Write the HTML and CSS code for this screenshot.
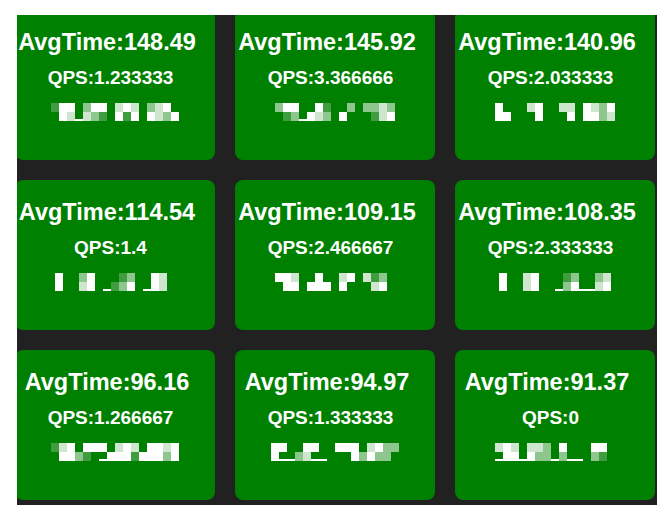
FILE: index.html
```html
<!DOCTYPE html>
<html>
<head>
<meta charset="utf-8">
<title>Stats</title>
<link rel="stylesheet" href="styles.css">
</head>
<body>
<div class="frame">
  <div class="grid">
    <div class="card">
      <div class="title">AvgTime:148.49</div>
      <div class="qps">QPS:1.233333</div>
      <div class="mosaic">
        <div class="mrow"><i class="d"></i><i class="w"></i><i class="w"></i><i></i><i class="m"></i><i class="w"></i><i class="w"></i><i></i><i class="l"></i><i class="w"></i><i class="l"></i><i></i><i class="m"></i><i class="l"></i><i class="w"></i><i></i></div>
        <div class="mrow"><i></i><i class="w"></i><i class="l"></i><i class="u"></i><i class="l"></i><i class="m"></i><i class="d"></i><i></i><i class="w"></i><i class="d"></i><i class="w"></i><i></i><i class="w"></i><i class="l"></i><i class="m"></i><i class="w"></i></div>
      </div>
    </div>
    <div class="card">
      <div class="title">AvgTime:145.92</div>
      <div class="qps">QPS:3.366666</div>
      <div class="mosaic">
        <div class="mrow"><i class="m"></i><i class="w"></i><i class="w"></i><i></i><i></i><i class="w"></i><i class="d"></i><i></i><i></i><i class="m"></i><i></i><i class="m"></i><i class="m"></i><i class="l"></i><i class="m"></i></div>
        <div class="mrow"><i></i><i class="d"></i><i class="m"></i><i class="u"></i><i class="w"></i><i class="l"></i><i class="m"></i><i></i><i class="w"></i><i></i><i></i><i></i><i class="d"></i><i class="l"></i><i class="w"></i></div>
      </div>
    </div>
    <div class="card">
      <div class="title">AvgTime:140.96</div>
      <div class="qps">QPS:2.033333</div>
      <div class="mosaic">
        <div class="mrow"><i class="w"></i><i></i><i></i><i></i><i class="l"></i><i class="w"></i><i></i><i></i><i class="l"></i><i class="l"></i><i></i><i class="w"></i><i class="l"></i><i class="m"></i><i class="w"></i></div>
        <div class="mrow"><i class="w"></i><i class="w"></i><i></i><i></i><i></i><i class="w"></i><i></i><i></i><i></i><i class="w"></i><i></i><i class="w"></i><i class="w"></i><i class="m"></i><i class="l"></i></div>
      </div>
    </div>
    <div class="card">
      <div class="title">AvgTime:114.54</div>
      <div class="qps">QPS:1.4</div>
      <div class="mosaic">
        <div class="mrow"><i class="w"></i><i></i><i></i><i class="m"></i><i class="w"></i><i></i><i></i><i></i><i class="d"></i><i class="m"></i><i></i><i></i><i class="w"></i><i class="l"></i><i></i></div>
        <div class="mrow"><i class="w"></i><i></i><i></i><i class="l"></i><i class="w"></i><i></i><i class="u"></i><i class="d"></i><i class="m"></i><i class="w"></i><i></i><i class="u"></i><i class="w"></i><i class="l"></i><i></i></div>
      </div>
    </div>
    <div class="card">
      <div class="title">AvgTime:109.15</div>
      <div class="qps">QPS:2.466667</div>
      <div class="mosaic">
        <div class="mrow"><i class="w"></i><i class="w"></i><i class="l"></i><i></i><i></i><i class="w"></i><i></i><i></i><i class="l"></i><i class="w"></i><i></i><i class="l"></i><i class="d"></i><i class="m"></i><i></i></div>
        <div class="mrow"><i></i><i class="w"></i><i class="w"></i><i></i><i class="w"></i><i class="w"></i><i class="w"></i><i></i><i class="w"></i><i></i><i></i><i></i><i class="l"></i><i class="w"></i><i></i></div>
      </div>
    </div>
    <div class="card">
      <div class="title">AvgTime:108.35</div>
      <div class="qps">QPS:2.333333</div>
      <div class="mosaic">
        <div class="mrow"><i class="w"></i><i></i><i></i><i class="l"></i><i class="w"></i><i></i><i></i><i></i><i class="d"></i><i class="m"></i><i></i><i></i><i class="m"></i><i class="l"></i></div>
        <div class="mrow"><i class="w"></i><i></i><i></i><i class="l"></i><i class="w"></i><i></i><i></i><i class="u"></i><i class="m"></i><i class="w"></i><i class="u"></i><i class="u"></i><i class="l"></i><i class="w"></i></div>
      </div>
    </div>
    <div class="card">
      <div class="title">AvgTime:96.16</div>
      <div class="qps">QPS:1.266667</div>
      <div class="mosaic">
        <div class="mrow"><i class="d"></i><i class="l"></i><i class="w"></i><i></i><i class="w"></i><i class="w"></i><i class="w"></i><i></i><i class="l"></i><i class="w"></i><i class="l"></i><i></i><i class="w"></i><i class="w"></i><i class="l"></i><i class="w"></i></div>
        <div class="mrow"><i></i><i class="w"></i><i class="w"></i><i class="m"></i><i class="d"></i><i></i><i class="u"></i><i class="w"></i><i class="w"></i><i class="w"></i><i class="d"></i><i class="w"></i><i class="w"></i><i class="w"></i><i class="m"></i><i class="w"></i></div>
      </div>
    </div>
    <div class="card">
      <div class="title">AvgTime:94.97</div>
      <div class="qps">QPS:1.333333</div>
      <div class="mosaic">
        <div class="mrow"><i class="w"></i><i class="w"></i><i></i><i></i><i class="w"></i><i class="w"></i><i></i><i></i><i class="w"></i><i class="w"></i><i class="w"></i><i></i><i class="l"></i><i class="w"></i><i class="m"></i><i class="m"></i></div>
        <div class="mrow"><i class="w"></i><i class="u"></i><i class="u"></i><i class="m"></i><i class="l"></i><i class="u"></i><i class="u"></i><i></i><i></i><i></i><i class="w"></i><i class="m"></i><i class="w"></i><i class="m"></i><i class="m"></i><i></i></div>
      </div>
    </div>
    <div class="card">
      <div class="title">AvgTime:91.37</div>
      <div class="qps">QPS:0</div>
      <div class="mosaic">
        <div class="mrow"><i class="l"></i><i class="w"></i><i class="l"></i><i></i><i class="l"></i><i class="l"></i><i class="m"></i><i></i><i class="w"></i><i></i><i></i><i></i><i class="w"></i><i class="w"></i><i></i></div>
        <div class="mrow"><i class="u"></i><i class="w"></i><i class="w"></i><i class="u"></i><i class="w"></i><i class="m"></i><i class="m"></i><i class="u"></i><i class="m"></i><i class="u"></i><i class="u"></i><i></i><i class="m"></i><i class="d"></i><i></i></div>
      </div>
    </div>
  </div>
</div>
</body>
</html>
```

FILE: styles.css
```css
html, body {
  margin: 0;
  padding: 0;
  background: #ffffff;
}

.frame {
  margin: 15px 0 0 17px;
  width: 640px;
  height: 490px;
  background: #212121;
  overflow: hidden;
}

.grid {
  display: grid;
  grid-template-columns: repeat(3, 200px);
  grid-auto-rows: 150px;
  gap: 20px;
  margin: -5px 0 0 -2px;
}

.card {
  background: #008000;
  border-radius: 8px;
  color: #ffffff;
  font-family: "Liberation Sans", Arial, sans-serif;
  font-weight: bold;
  padding-top: 20px;
  box-sizing: border-box;
}

.title {
  font-size: 23.5px;
  line-height: 25px;
  text-align: center;
  padding-right: 16px;
  white-space: nowrap;
}

.qps {
  margin-top: 12px;
  font-size: 19px;
  line-height: 22px;
  text-align: center;
  padding-right: 9px;
  white-space: nowrap;
}

.mosaic {
  margin-top: 14px;
  display: flex;
  flex-direction: column;
  align-items: center;
}

.mrow {
  display: flex;
}

.mosaic i {
  display: block;
  width: 8px;
  height: 9px;
}

.mosaic i.w { background: #ffffff; }
.mosaic i.l { background: #cde6cd; }
.mosaic i.m { background: #8ec78e; }
.mosaic i.d { background: #3f9c3f; }
.mosaic i.u { background: linear-gradient(transparent 7px, #ffffff 7px); }
```
